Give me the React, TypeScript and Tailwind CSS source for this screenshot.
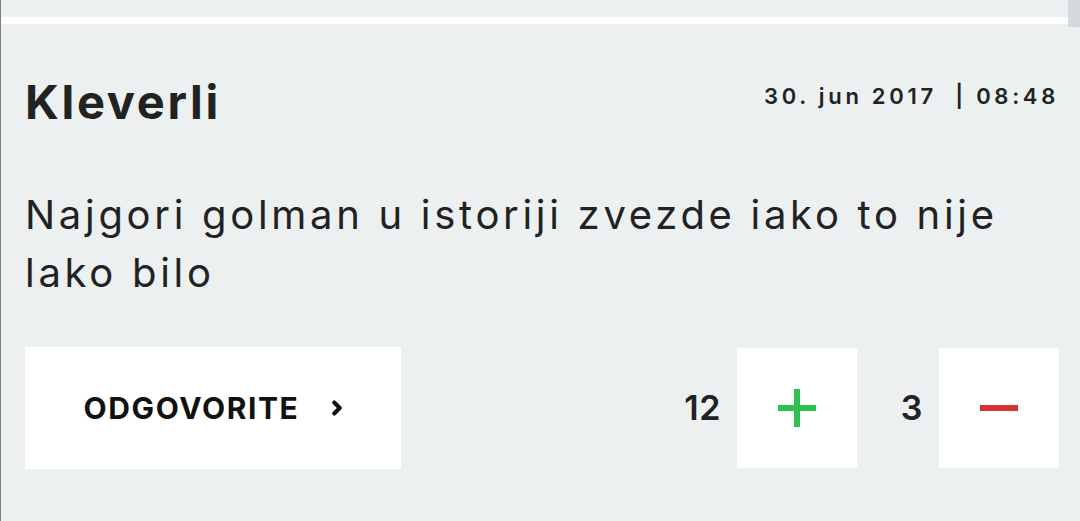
import { ChevronRight } from 'lucide-react'

function VoteBox({ count, kind }: { count: number; kind: 'up' | 'down' }) {
  return (
    <div className="flex items-center">
      <span className="mr-4 text-[34px] font-semibold leading-none tracking-[0.5px] text-[#222]">{count}</span>
      <button className="flex h-[120px] w-[120px] items-center justify-center bg-white">
        {kind === 'up' ? (
          <svg width="38" height="38" viewBox="0 0 38 38">
            <rect x="16" y="0" width="6" height="38" fill="#2fc052" />
            <rect x="0" y="16" width="38" height="6" fill="#2fc052" />
          </svg>
        ) : (
          <svg width="38" height="8" viewBox="0 0 38 8">
            <rect x="0" y="1" width="38" height="6" fill="#d43434" />
          </svg>
        )}
      </button>
    </div>
  )
}

function App() {
  return (
    <div className="relative h-[521px] overflow-hidden border-l border-[#7d7d7d] bg-[#ecf0f1] font-['Inter',sans-serif] text-[#222]">
      {/* scrollbar thumb */}
      <div className="absolute right-0 top-0 h-[27px] w-[12px] bg-[#d4d9db]" />

      <div className="h-[17px]" />
      <div className="h-[7px] bg-white" />

      <div className="pl-6 pr-[21px] pt-[54px]">
        <div className="flex items-start justify-between">
          <h2 className="text-[47px] font-bold leading-none tracking-[2.7px]">Kleverli</h2>
          <div className="mt-[7px] text-[22px] font-semibold leading-none tracking-[3.7px]">30. jun 2017&nbsp; | 08:48</div>
        </div>

        <p className="mt-[61px] text-[40px] leading-[58px] tracking-[3.7px]">
          Najgori golman u istoriji zvezde iako to nije lako bilo
        </p>

        <div className="mt-[45px] flex items-center justify-between">
          <button className="flex h-[122px] w-[376px] items-center justify-center gap-[27px] bg-white pl-[6px]">
            <span className="text-[30px] font-bold leading-none tracking-[1.6px] text-[#111]">ODGOVORITE</span>
            <ChevronRight size={22} strokeWidth={4.5} className="text-[#111]" />
          </button>
          <div className="flex items-center gap-[44px]">
            <VoteBox count={12} kind="up" />
            <VoteBox count={3} kind="down" />
          </div>
        </div>
      </div>
    </div>
  )
}

export default App
